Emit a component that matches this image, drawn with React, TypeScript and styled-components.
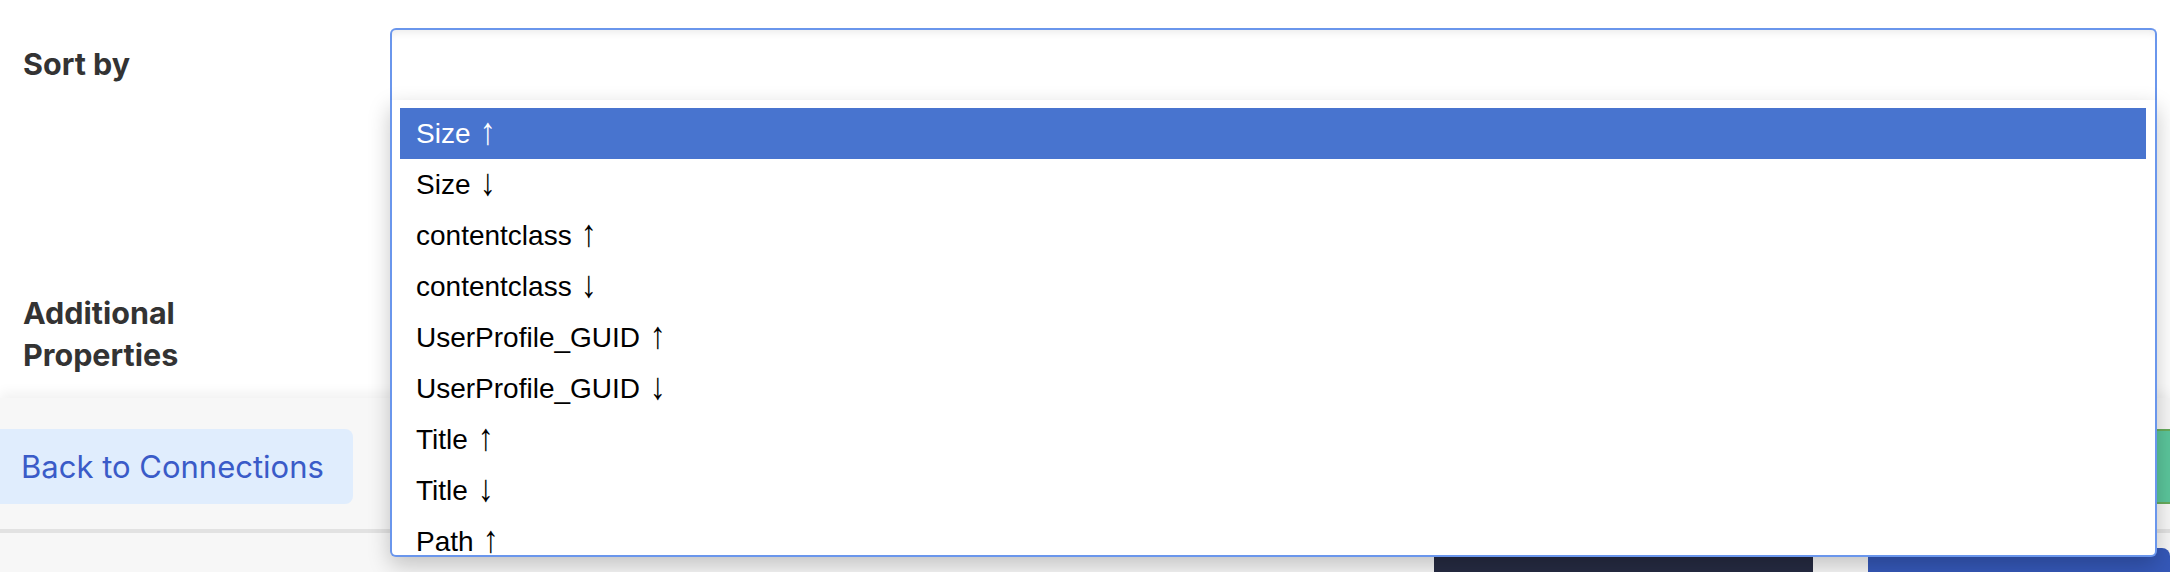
import styled, { createGlobalStyle } from 'styled-components';

const GlobalStyle = createGlobalStyle`
  html, body {
    margin: 0;
    padding: 0;
    background: #fff;
  }
  body {
    font-family: Inter, "Liberation Sans", sans-serif;
  }
`;

const Page = styled.div`
  width: 2170px;
  height: 572px;
  overflow: hidden;
  background: #fff;
  display: flex;
  flex-direction: column;
`;

const Form = styled.div`
  flex-shrink: 0;
  box-sizing: border-box;
  height: 398px;
  padding: 28px 13px 22px 23px;
  display: grid;
  grid-template-columns: 367px 1fr;
  row-gap: 192px;
  align-items: center;
`;

const Label = styled.div`
  max-width: 190px;
  font-size: 30.5px;
  line-height: 42px;
  font-weight: 700;
  color: #333;
`;

const SelectWrap = styled.div`
  position: relative;
`;

const SelectBox = styled.div`
  box-sizing: border-box;
  height: 72px;
  border: 2px solid #6a96ec;
  border-bottom: none;
  border-radius: 6px 6px 0 0;
  background: #fff;
  box-shadow: inset 0 9px 9px -7px rgba(0, 0, 0, 0.09);
`;

const Listbox = styled.ul`
  position: absolute;
  top: 100%;
  left: 0;
  z-index: 10;
  box-sizing: border-box;
  width: 100%;
  height: 457px;
  margin: 0;
  padding: 8px 9px 0 8px;
  list-style: none;
  overflow: hidden;
  background: #fff;
  border: 2px solid #6a96ec;
  border-top: none;
  border-radius: 0 0 6px 6px;
  box-shadow: 0 8px 22px rgba(0, 0, 0, 0.22);
`;

const Option = styled.li<{ $selected?: boolean }>`
  height: 51px;
  line-height: 51px;
  padding-left: 16px;
  font-family: "Liberation Sans", Arial, sans-serif;
  font-size: 28px;
  white-space: nowrap;
  color: ${({ $selected }) => ($selected ? '#fff' : '#000')};
  background: ${({ $selected }) => ($selected ? '#4874cf' : 'transparent')};
`;

const Arrow = styled.span`
  display: inline-block;
  font-size: 38px;
  line-height: 0;
  vertical-align: -1px;
  transform: scaleX(0.85);
`;

const TextField = styled.div`
  box-sizing: border-box;
  height: 72px;
  border: 2px solid #ddd;
  border-radius: 6px;
  background: #fff;
`;

const Footer = styled.div`
  flex-shrink: 0;
  box-sizing: border-box;
  height: 135px;
  padding-top: 31px;
  display: flex;
  align-items: flex-start;
  justify-content: space-between;
  background: #f7f7f7;
  border-bottom: 4px solid #e2e2e2;
  box-shadow: 0 -5px 12px rgba(0, 0, 0, 0.06);
`;

const BackButton = styled.button`
  height: 75px;
  margin-left: -12px;
  padding: 0 29px 0 33px;
  border: none;
  border-radius: 8px;
  background: #e0edfd;
  color: #3a5bc8;
  font-family: Inter, "Liberation Sans", sans-serif;
  font-size: 31px;
  font-weight: 400;
`;

const SaveButton = styled.button`
  width: 240px;
  height: 75px;
  margin-right: -100px;
  border: 2px solid #67ab5c;
  border-radius: 8px;
  background: #5bc59b;
  color: #fff;
  font-family: Inter, "Liberation Sans", sans-serif;
  font-size: 28px;
`;

const BottomBar = styled.div`
  flex: 1;
  min-height: 0;
  overflow: hidden;
  display: flex;
  justify-content: flex-end;
  align-items: flex-start;
  gap: 55px;
  padding-top: 15px;
  background: #f7f7f7;
`;

const BarButton = styled.button<{ $tone: 'dark' | 'blue'; $width: number }>`
  flex-shrink: 0;
  width: ${({ $width }) => $width}px;
  height: 60px;
  border: none;
  border-radius: 8px;
  background: ${({ $tone }) => ($tone === 'dark' ? '#262b42' : '#3558b8')};
  color: #fff;
  font-family: Inter, "Liberation Sans", sans-serif;
  font-size: 28px;
`;

const sortOptions = [
  { label: 'Size', dir: '↑' },
  { label: 'Size', dir: '↓' },
  { label: 'contentclass', dir: '↑' },
  { label: 'contentclass', dir: '↓' },
  { label: 'UserProfile_GUID', dir: '↑' },
  { label: 'UserProfile_GUID', dir: '↓' },
  { label: 'Title', dir: '↑' },
  { label: 'Title', dir: '↓' },
  { label: 'Path', dir: '↑' },
  { label: 'Path', dir: '↓' },
];

const App = () => (
  <>
    <GlobalStyle />
    <Page>
      <Form>
        <Label>Sort by</Label>
        <SelectWrap>
          <SelectBox />
          <Listbox>
            {sortOptions.map((opt, idx) => (
              <Option key={idx} $selected={idx === 0}>
                {opt.label} <Arrow>{opt.dir}</Arrow>
              </Option>
            ))}
          </Listbox>
        </SelectWrap>
        <Label>Additional Properties</Label>
        <TextField />
      </Form>
      <Footer>
        <BackButton>Back to Connections</BackButton>
        <SaveButton />
      </Footer>
      <BottomBar>
        <BarButton $tone="dark" $width={379} />
        <BarButton $tone="blue" $width={302} />
      </BottomBar>
    </Page>
  </>
);

export default App;
